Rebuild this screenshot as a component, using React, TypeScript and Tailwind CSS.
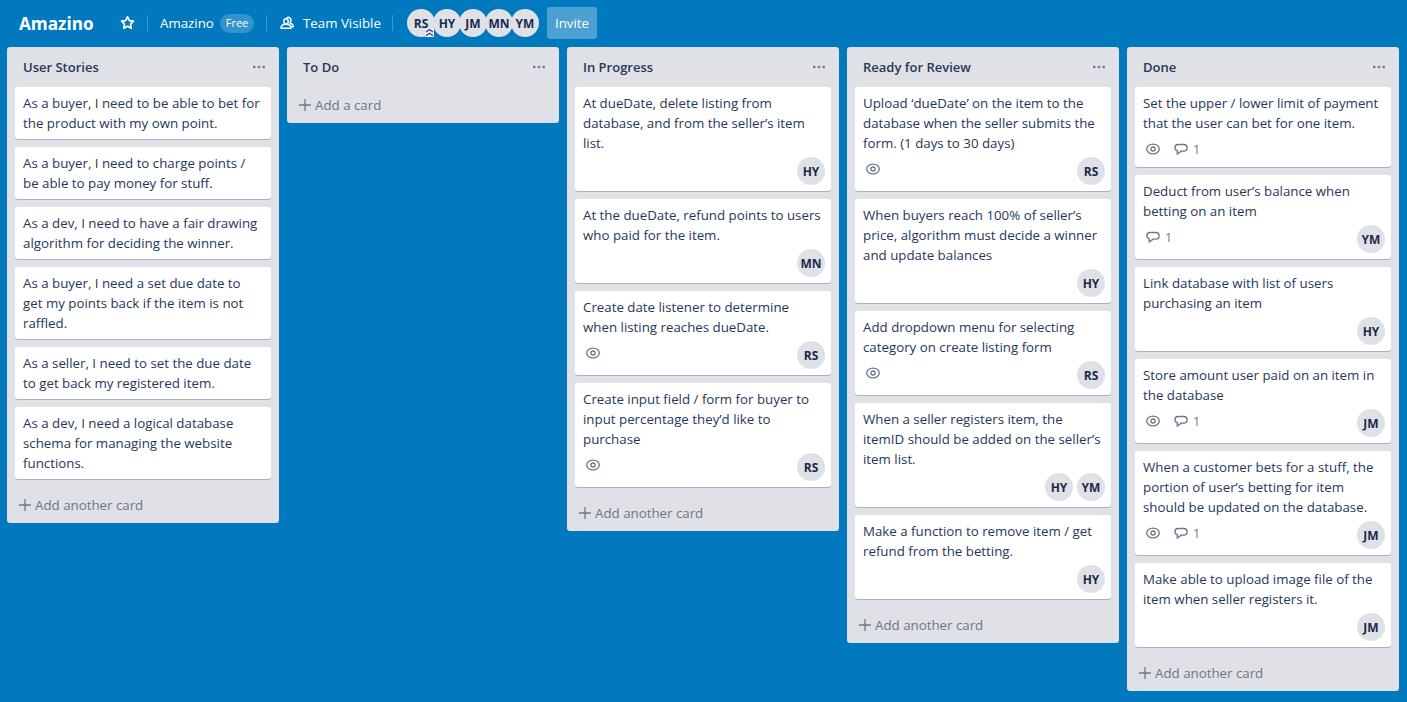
import React from "react";

type Card = { lines: string[]; watch?: boolean; comments?: number; members?: string[] };
type Column = { title: string; cards: Card[] };

const columns: Column[] = [
  {
    title: "User Stories",
    cards: [
      { lines: ["As a buyer, I need to be able to bet for", "the product with my own point."] },
      { lines: ["As a buyer, I need to charge points /", "be able to pay money for stuff."] },
      { lines: ["As a dev, I need to have a fair drawing", "algorithm for deciding the winner."] },
      { lines: ["As a buyer, I need a set due date to", "get my points back if the item is not", "raffled."] },
      { lines: ["As a seller, I need to set the due date", "to get back my registered item."] },
      { lines: ["As a dev, I need a logical database", "schema for managing the website", "functions."] },
    ],
  },
  { title: "To Do", cards: [] },
  {
    title: "In Progress",
    cards: [
      { lines: ["At dueDate, delete listing from", "database, and from the seller’s item", "list."], members: ["HY"] },
      { lines: ["At the dueDate, refund points to users", "who paid for the item."], members: ["MN"] },
      { lines: ["Create date listener to determine", "when listing reaches dueDate."], watch: true, members: ["RS"] },
      { lines: ["Create input field / form for buyer to", "input percentage they’d like to", "purchase"], watch: true, members: ["RS"] },
    ],
  },
  {
    title: "Ready for Review",
    cards: [
      { lines: ["Upload ‘dueDate’ on the item to the", "database when the seller submits the", "form. (1 days to 30 days)"], watch: true, members: ["RS"] },
      { lines: ["When buyers reach 100% of seller’s", "price, algorithm must decide a winner", "and update balances"], members: ["HY"] },
      { lines: ["Add dropdown menu for selecting", "category on create listing form"], watch: true, members: ["RS"] },
      { lines: ["When a seller registers item, the", "itemID should be added on the seller’s", "item list."], members: ["HY", "YM"] },
      { lines: ["Make a function to remove item / get", "refund from the betting."], members: ["HY"] },
    ],
  },
  {
    title: "Done",
    cards: [
      { lines: ["Set the upper / lower limit of payment", "that the user can bet for one item."], watch: true, comments: 1 },
      { lines: ["Deduct from user’s balance when", "betting on an item"], comments: 1, members: ["YM"] },
      { lines: ["Link database with list of users", "purchasing an item"], members: ["HY"] },
      { lines: ["Store amount user paid on an item in", "the database"], watch: true, comments: 1, members: ["JM"] },
      { lines: ["When a customer bets for a stuff, the", "portion of user’s betting for item", "should be updated on the database."], watch: true, comments: 1, members: ["JM"] },
      { lines: ["Make able to upload image file of the", "item when seller registers it."], members: ["JM"] },
    ],
  },
];

function Eye() {
  return (
    <svg width="16" height="16" viewBox="0 0 16 16" fill="none" stroke="#6b778c" strokeWidth="1.3">
      <ellipse cx="8" cy="8" rx="6.3" ry="4.9" />
      <circle cx="8" cy="8" r="2" />
    </svg>
  );
}

function Comment() {
  return (
    <svg width="16" height="16" viewBox="0 0 16 16" fill="none" stroke="#6b778c" strokeWidth="1.4" strokeLinejoin="round">
      <path d="M5.200 3.500h5.600a3.300 3.300 0 0 1 0 6.600H8.200L4.300 13V9.600C2.700 9.300 1.900 8.300 1.900 6.800c0-2 1.300-3.300 3.300-3.300z" />
    </svg>
  );
}

function Plus() {
  return (
    <svg width="12" height="12" viewBox="0 0 12 12" fill="none" stroke="#6b778c" strokeWidth="1.3">
      <path d="M6 0v12M0 6h12" />
    </svg>
  );
}

function Avatar({ name }: { name: string }) {
  return (
    <span className="flex size-7 shrink-0 items-center justify-center rounded-full bg-[#dfe1e6] pt-px text-[12px] font-bold leading-7 text-[#172b4d]">
      {name}
    </span>
  );
}

function CardView({ card }: { card: Card }) {
  return (
    <article className="rounded-[3px] bg-white pt-1.5 pb-1.5 shadow-[0_1px_0_#a9b3c1]">
      <p className="px-2 text-[13.3px] leading-5 text-[#253858]">
        {card.lines.map((line) => (
          <span key={line} className="block whitespace-nowrap">{line}</span>
        ))}
      </p>
      {(card.watch || card.comments || card.members) && (
        <div className="flex items-start justify-between pr-1.5 pl-2.5">
          <div className="flex h-7 items-center gap-3 pt-1 text-[12.5px] text-[#6b778c]">
            {card.watch && <Eye />}
            {card.comments && (
              <span className="flex items-center gap-1"><Comment /><span className="pt-0.5">{card.comments}</span></span>
            )}
          </div>
          {card.members && (
            <div className="flex gap-1 pt-1">
              {card.members.map((m) => <Avatar key={m} name={m} />)}
            </div>
          )}
        </div>
      )}
    </article>
  );
}

function ColumnView({ column }: { column: Column }) {
  return (
    <section className="w-[272px] shrink-0 rounded-[3px] bg-[#dfe1e6] px-2">
      <header className="flex h-10 items-center justify-between pr-1 pl-2">
        <h2 className="pt-px text-[13px] font-semibold text-[#253858]">{column.title}</h2>
        <svg width="16" height="16" viewBox="0 0 16 16" fill="#6b778c">
          <circle cx="3.300" cy="8" r="1.300" /><circle cx="8" cy="8" r="1.300" /><circle cx="12.700" cy="8" r="1.300" />
        </svg>
      </header>
      {column.cards.length > 0 && (
        <div className="flex flex-col gap-2 pb-2">
          {column.cards.map((card) => <CardView key={card.lines[0]} card={card} />)}
        </div>
      )}
      <button className="flex h-9 items-center gap-1 pl-1 text-[13.3px] text-[#6b778c]">
        <Plus />
        <span className="pt-0.5">{column.cards.length ? "Add another card" : "Add a card"}</span>
      </button>
    </section>
  );
}

export default function App() {
  return (
    <div className="h-[702px] w-[1407px] overflow-hidden bg-[#0079bf] font-['Open_Sans','Noto_Sans',sans-serif]">
      <header className="flex h-[47px] items-center pb-px text-[13.3px] text-white">
        <h1 className="ml-[19px] w-[100px] pt-0.5 text-[17.2px] font-bold">Amazino</h1>
        <svg width="16" height="16" viewBox="0 0 16 16" fill="none" stroke="#fff" strokeWidth="1.8" strokeLinejoin="round">
          <path d="M8.500 1.900l1.900 3.700 4 .6-2.900 2.900.7 4.100L8.500 11.300l-3.700 1.900.7-4.100-2.900-2.900 4-.6z" />
        </svg>
        <span className="ml-3 h-4 w-px bg-white/25" />
        <span className="ml-3 w-[60px] pt-0.5">Amazino</span>
        <span className="flex h-[19px] w-[34px] items-center justify-center rounded-full bg-white/20 pt-px text-[11px]">Free</span>
        <span className="ml-3 h-4 w-px bg-white/25" />
        <svg className="ml-3" width="16" height="16" viewBox="0 0 16 16" fill="none" stroke="#fff" strokeWidth="1.500" strokeLinejoin="round">
          <ellipse cx="7" cy="6.500" rx="2.200" ry="2.700" />
          <path d="M2 13.200c0-2.400 1.500-3.700 4-4h2c2.500.3 4 1.600 4 4z" />
          <path d="M7.500 3.600c1-2 4.500-1.500 4.500 1.700 0 1.300-.4 2.200-1 2.900 2.200.5 3.200 1.700 3.200 3.600H12" />
        </svg>
        <span className="ml-2 w-[89px] whitespace-nowrap pt-0.5">Team Visible</span>
        <span className="h-4 w-px bg-white/25" />
        <div className="ml-[14px] flex -space-x-0.5">
          {["RS", "HY", "JM", "MN", "YM"].map((m) => (
            <div key={m} className="relative">
              <Avatar name={m} />
              {m === "RS" && (
                <svg className="absolute top-[19px] left-[18px] z-10" width="9" height="9" viewBox="0 0 9 9">
                  <rect width="9" height="9" fill="#eeeef5" />
                  <path d="M1 4l3.500-2.500L8 4M1 7.800l3.500-2.500L8 7.800" fill="none" stroke="#42389d" strokeWidth="1.300" />
                </svg>
              )}
            </div>
          ))}
        </div>
        <button className="ml-2 h-8 w-[50px] rounded-[3px] bg-white/30 pt-0.5">Invite</button>
      </header>
      <main className="flex items-start gap-2 pl-[7px]">
        {columns.map((c) => <ColumnView key={c.title} column={c} />)}
      </main>
    </div>
  );
}
